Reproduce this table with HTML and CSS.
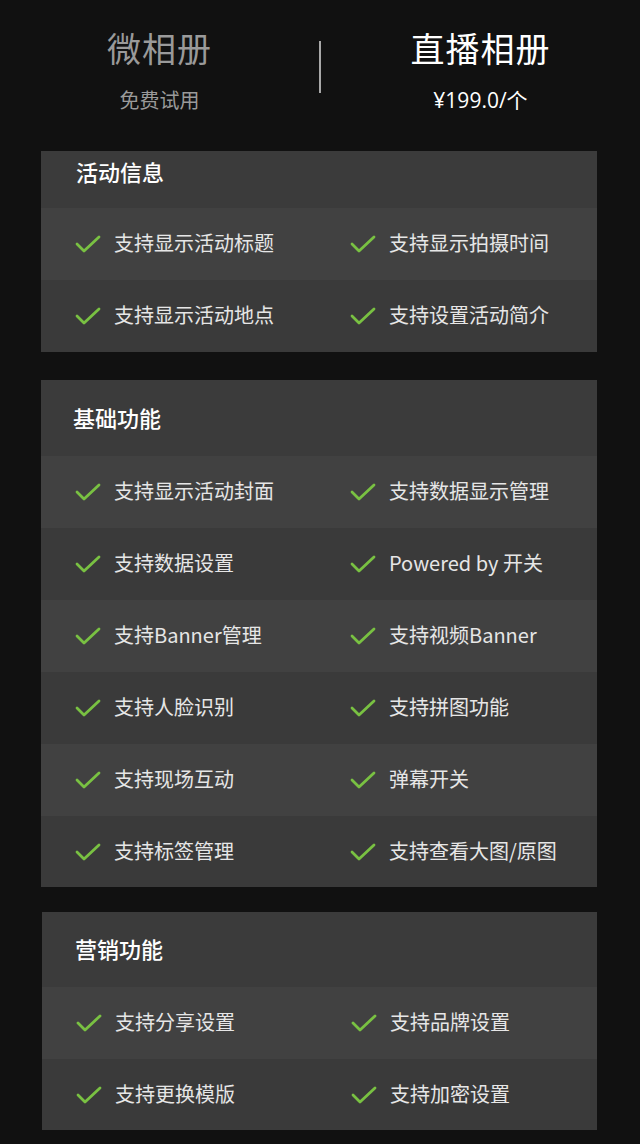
FILE: index.html
```html
<!DOCTYPE html>
<html lang="zh-CN">
<head>
<meta charset="utf-8">
<title>相册对比</title>
<link rel="stylesheet" href="styles.css">
</head>
<body>
<div class="page">
  <header class="plans">
    <div class="plan plan-free">
      <div class="plan-name">微相册</div>
      <div class="plan-price">免费试用</div>
    </div>
    <div class="divider"></div>
    <div class="plan plan-live">
      <div class="plan-name">直播相册</div>
      <div class="plan-price">¥199.0/个</div>
    </div>
  </header>

  <section class="card card-first">
    <div class="card-title">活动信息</div>
    <div class="row"><div class="item"><svg class="check" viewBox="0 0 26 18"><polyline points="2,9 9,16 24,2"/></svg><span>支持显示活动标题</span></div><div class="item"><svg class="check" viewBox="0 0 26 18"><polyline points="2,9 9,16 24,2"/></svg><span>支持显示拍摄时间</span></div></div>
    <div class="row"><div class="item"><svg class="check" viewBox="0 0 26 18"><polyline points="2,9 9,16 24,2"/></svg><span>支持显示活动地点</span></div><div class="item"><svg class="check" viewBox="0 0 26 18"><polyline points="2,9 9,16 24,2"/></svg><span>支持设置活动简介</span></div></div>
  </section>

  <section class="card card-middle">
    <div class="card-title">基础功能</div>
    <div class="row"><div class="item"><svg class="check" viewBox="0 0 26 18"><polyline points="2,9 9,16 24,2"/></svg><span>支持显示活动封面</span></div><div class="item"><svg class="check" viewBox="0 0 26 18"><polyline points="2,9 9,16 24,2"/></svg><span>支持数据显示管理</span></div></div>
    <div class="row"><div class="item"><svg class="check" viewBox="0 0 26 18"><polyline points="2,9 9,16 24,2"/></svg><span>支持数据设置</span></div><div class="item"><svg class="check" viewBox="0 0 26 18"><polyline points="2,9 9,16 24,2"/></svg><span>Powered by 开关</span></div></div>
    <div class="row"><div class="item"><svg class="check" viewBox="0 0 26 18"><polyline points="2,9 9,16 24,2"/></svg><span>支持Banner管理</span></div><div class="item"><svg class="check" viewBox="0 0 26 18"><polyline points="2,9 9,16 24,2"/></svg><span>支持视频Banner</span></div></div>
    <div class="row"><div class="item"><svg class="check" viewBox="0 0 26 18"><polyline points="2,9 9,16 24,2"/></svg><span>支持人脸识别</span></div><div class="item"><svg class="check" viewBox="0 0 26 18"><polyline points="2,9 9,16 24,2"/></svg><span>支持拼图功能</span></div></div>
    <div class="row"><div class="item"><svg class="check" viewBox="0 0 26 18"><polyline points="2,9 9,16 24,2"/></svg><span>支持现场互动</span></div><div class="item"><svg class="check" viewBox="0 0 26 18"><polyline points="2,9 9,16 24,2"/></svg><span>弹幕开关</span></div></div>
    <div class="row"><div class="item"><svg class="check" viewBox="0 0 26 18"><polyline points="2,9 9,16 24,2"/></svg><span>支持标签管理</span></div><div class="item"><svg class="check" viewBox="0 0 26 18"><polyline points="2,9 9,16 24,2"/></svg><span>支持查看大图/原图</span></div></div>
  </section>

  <section class="card card-last">
    <div class="card-title">营销功能</div>
    <div class="row"><div class="item"><svg class="check" viewBox="0 0 26 18"><polyline points="2,9 9,16 24,2"/></svg><span>支持分享设置</span></div><div class="item"><svg class="check" viewBox="0 0 26 18"><polyline points="2,9 9,16 24,2"/></svg><span>支持品牌设置</span></div></div>
    <div class="row"><div class="item"><svg class="check" viewBox="0 0 26 18"><polyline points="2,9 9,16 24,2"/></svg><span>支持更换模版</span></div><div class="item"><svg class="check" viewBox="0 0 26 18"><polyline points="2,9 9,16 24,2"/></svg><span>支持加密设置</span></div></div>
  </section>
</div>
</body>
</html>
```

FILE: styles.css
```css
html, body {
  margin: 0;
  padding: 0;
  background: #111111;
}
body {
  font-family: "Noto Sans CJK SC", "Noto Sans", sans-serif;
  color: #e8e8e8;
}
.page {
  width: 640px;
  height: 1144px;
  overflow: hidden;
  display: flex;
  flex-direction: column;
}
.plans {
  display: flex;
  align-items: center;
  height: 151px;
  box-sizing: border-box;
  padding-bottom: 14px;
}
.plan {
  flex: 1;
  display: flex;
  flex-direction: column;
  align-items: center;
}
.plan-free {
  color: #9a9a9a;
}
.plan-live {
  color: #ffffff;
}
.plan-name {
  font-size: 34px;
  line-height: 48px;
  letter-spacing: 1px;
}
.plan-price {
  font-size: 20px;
  line-height: 28px;
  margin-top: 14px;
}
.plan-live .plan-price {
  font-family: "Open Sans", "Noto Sans CJK SC", sans-serif;
  font-size: 21px;
}
.divider {
  width: 2px;
  height: 52px;
  background: #a8a8a8;
  margin-top: -4px;
}
.card {
  margin: 0 43px 0 41px;
  background: #3a3a3a;
}
.card-middle {
  margin-top: 28px;
}
.card-last {
  margin-left: 42px;
  margin-top: 25px;
}
.card-title {
  height: 76px;
  box-sizing: border-box;
  display: flex;
  align-items: center;
  padding-left: 32px;
  padding-bottom: 3px;
  font-size: 22px;
  font-weight: 500;
  color: #ffffff;
  background: #3b3b3b;
}
.card-first .card-title {
  height: 57px;
  align-items: flex-start;
  padding-top: 4px;
  padding-bottom: 0;
  padding-left: 35px;
}
.card-last .card-title {
  height: 75px;
  padding-left: 33px;
}
.row {
  height: 72px;
  box-sizing: border-box;
  display: grid;
  grid-template-columns: 275px 1fr;
  align-items: center;
  padding-left: 34px;
  padding-bottom: 3px;
  background: #414141;
}
.row:nth-of-type(odd) {
  background: #3a3a3a;
}
.card-middle .row:last-child,
.card-last .row:last-child {
  height: 71px;
}
.item {
  display: flex;
  align-items: center;
  font-size: 20px;
  color: #e6e6e6;
}
.check {
  width: 26px;
  height: 18px;
  margin-right: 13px;
  margin-top: 3px;
  flex: none;
}
.check polyline {
  fill: none;
  stroke: #79c142;
  stroke-width: 2.8;
  stroke-linecap: round;
  stroke-linejoin: round;
}
```
